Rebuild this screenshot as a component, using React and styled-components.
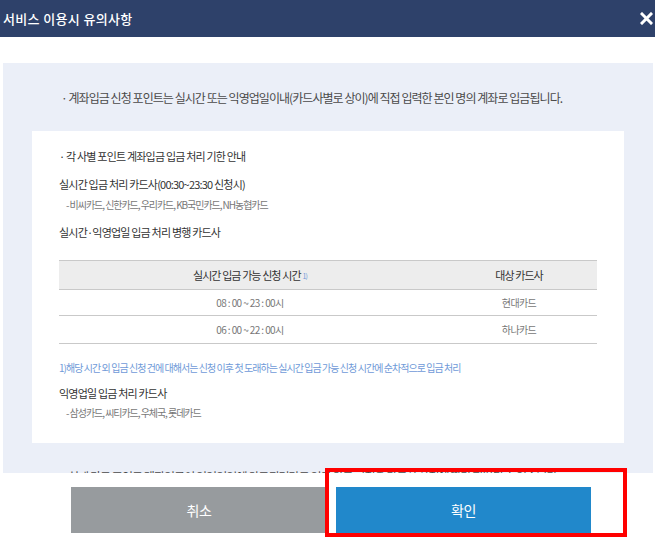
import React from 'react'
import styled, { createGlobalStyle } from 'styled-components'

const GlobalStyle = createGlobalStyle`
  html, body {
    margin: 0;
    padding: 0;
    background: #fff;
  }
  body {
    font-family: "Noto Sans CJK KR", "Noto Sans", sans-serif;
  }
`;

const Modal = styled.div`
  position: relative;
  width: 655px;
  height: 544px;
  background: #fff;
  overflow: hidden;
`;

const Header = styled.header`
  height: 37px;
  background: #2e416a;
  display: flex;
  align-items: center;
  justify-content: space-between;
  padding: 0 2px 0 3px;
  box-sizing: border-box;
`;

const Title = styled.h1`
  margin: 0;
  font-size: 13px;
  font-weight: 500;
  letter-spacing: 0.35px;
  color: #fff;
`;

const CloseButton = styled.button`
  border: none;
  background: none;
  padding: 0;
  width: 13px;
  height: 13px;
  display: flex;
  cursor: pointer;
`;

const Body = styled.div`
  padding: 26px 2px 0 3px;
`;

const ScrollArea = styled.div`
  height: 410px;
  background: #ebeff8;
  overflow: hidden;
  padding-top: 25px;
  box-sizing: border-box;
`;

const Notice = styled.p`
  margin: ${(p) => p.$top || 0}px 0 0;
  padding-left: ${(p) => p.$indent || 58}px;
  font-size: 12px;
  line-height: 20px;
  letter-spacing: -0.95px;
  color: #4a4a4a;
  white-space: nowrap;
`;

const InfoBox = styled.div`
  margin: 23px 29px 0;
  background: #fff;
  padding: 17px 27px 22px;
`;

const Line = styled.p`
  margin: ${(p) => p.$top || 0}px 0 0;
  padding-left: ${(p) => (p.$sub ? 7 : 0)}px;
  font-size: ${(p) => (p.$sub ? 10 : 11)}px;
  line-height: 16px;
  letter-spacing: ${(p) => (p.$sub ? -1.05 : -0.8)}px;
  color: ${(p) => (p.$sub ? '#777' : '#333')};
  white-space: nowrap;
`;

const Footnote = styled.p`
  margin: 16px 0 0;
  font-size: 10px;
  line-height: 16px;
  letter-spacing: -0.95px;
  color: #6f9ad8;
  white-space: nowrap;
`;

const Table = styled.table`
  width: 100%;
  margin-top: 20px;
  border-collapse: collapse;
  border-top: 1px solid #c9c9c9;
`;

const Th = styled.th`
  height: 28px;
  padding: 0;
  background: #ededed;
  border-bottom: 1px solid #c9c9c9;
  font-size: 11px;
  font-weight: 400;
  letter-spacing: -0.9px;
  color: #333;
  width: ${(p) => p.$w}px;
`;

const Td = styled.td`
  height: ${(p) => p.$h || 26}px;
  padding: 0;
  border-bottom: 1px solid #c9c9c9;
  text-align: center;
  font-size: 10px;
  letter-spacing: -0.6px;
  color: #777;
`;

const Sup = styled.span`
  font-size: 7px;
  color: #6f9ad8;
  margin-left: 2px;
  vertical-align: 1px;
`;

const Footer = styled.div`
  display: flex;
  gap: 9px;
  padding: 14px 0 0 71px;
`;

const ActionButton = styled.button`
  width: ${(p) => p.$w}px;
  height: 46px;
  border: none;
  background: ${(p) => (p.$primary ? '#2188cb' : '#979b9e')};
  color: #fff;
  font-family: inherit;
  font-size: 14px;
  letter-spacing: -0.5px;
  cursor: pointer;
`;

const Highlight = styled.div`
  position: absolute;
  left: 325px;
  top: 468px;
  width: 302px;
  height: 69px;
  border: 4px solid #ff0000;
  box-sizing: border-box;
  pointer-events: none;
`;

const rows = [
  { time: '08 : 00 ~ 23 : 00시', card: '현대카드', h: 25 },
  { time: '06 : 00 ~ 22 : 00시', card: '하나카드', h: 27 },
];

export default function App() {
  return (
    <>
      <GlobalStyle />
      <Modal>
        <Header>
          <Title>서비스 이용시 유의사항</Title>
          <CloseButton aria-label="닫기">
            <svg width="13" height="13" viewBox="0 0 13 13">
              <path d="M2 2 L11 11 M11 2 L2 11" stroke="#fff" strokeWidth="3" strokeLinecap="square" />
            </svg>
          </CloseButton>
        </Header>

        <Body>
          <ScrollArea>
            <Notice>· 계좌입금 신청 포인트는 실시간 또는 익영업일이내(카드사별로 상이)에 직접 입력한 본인 명의 계좌로 입금됩니다.</Notice>

            <InfoBox>
              <Line>· 각 사별 포인트 계좌입금 입금 처리 기한 안내</Line>
              <Line $top={12}>실시간 입금 처리 카드사(00:30~23:30 신청시)</Line>
              <Line $sub $top={5}>- 비씨카드, 신한카드, 우리카드, KB국민카드, NH농협카드</Line>
              <Line $top={11}>실시간·익영업일 입금 처리 병행 카드사</Line>

              <Table>
                <thead>
                  <tr>
                    <Th $w={382}>실시간 입금 가능 신청 시간<Sup>1)</Sup></Th>
                    <Th $w={156}>대상 카드사</Th>
                  </tr>
                </thead>
                <tbody>
                  {rows.map((r) => (
                    <tr key={r.card}>
                      <Td $h={r.h}>{r.time}</Td>
                      <Td $h={r.h}>{r.card}</Td>
                    </tr>
                  ))}
                </tbody>
              </Table>

              <Footnote>1)해당 시간 외 입금 신청 건에 대해서는 신청 이후 첫 도래하는 실시간 입금 가능 신청 시간에 순차적으로 입금 처리</Footnote>
              <Line $top={9}>익영업일 입금 처리 카드사</Line>
              <Line $sub $top={4}>- 삼성카드, 씨티카드, 우체국, 롯데카드</Line>
            </InfoBox>

            <Notice $top={24} $indent={65}>실제 카드 포인트 계좌입금이 익영업일에 완료되더라도 입금 완료 시점은 카드사 사정에 따라 지연될 수 있습니다.</Notice>
          </ScrollArea>
        </Body>

        <Footer>
          <ActionButton $w={256}>취소</ActionButton>
          <ActionButton $w={255} $primary>확인</ActionButton>
        </Footer>

        <Highlight />
      </Modal>
    </>
  );
}
